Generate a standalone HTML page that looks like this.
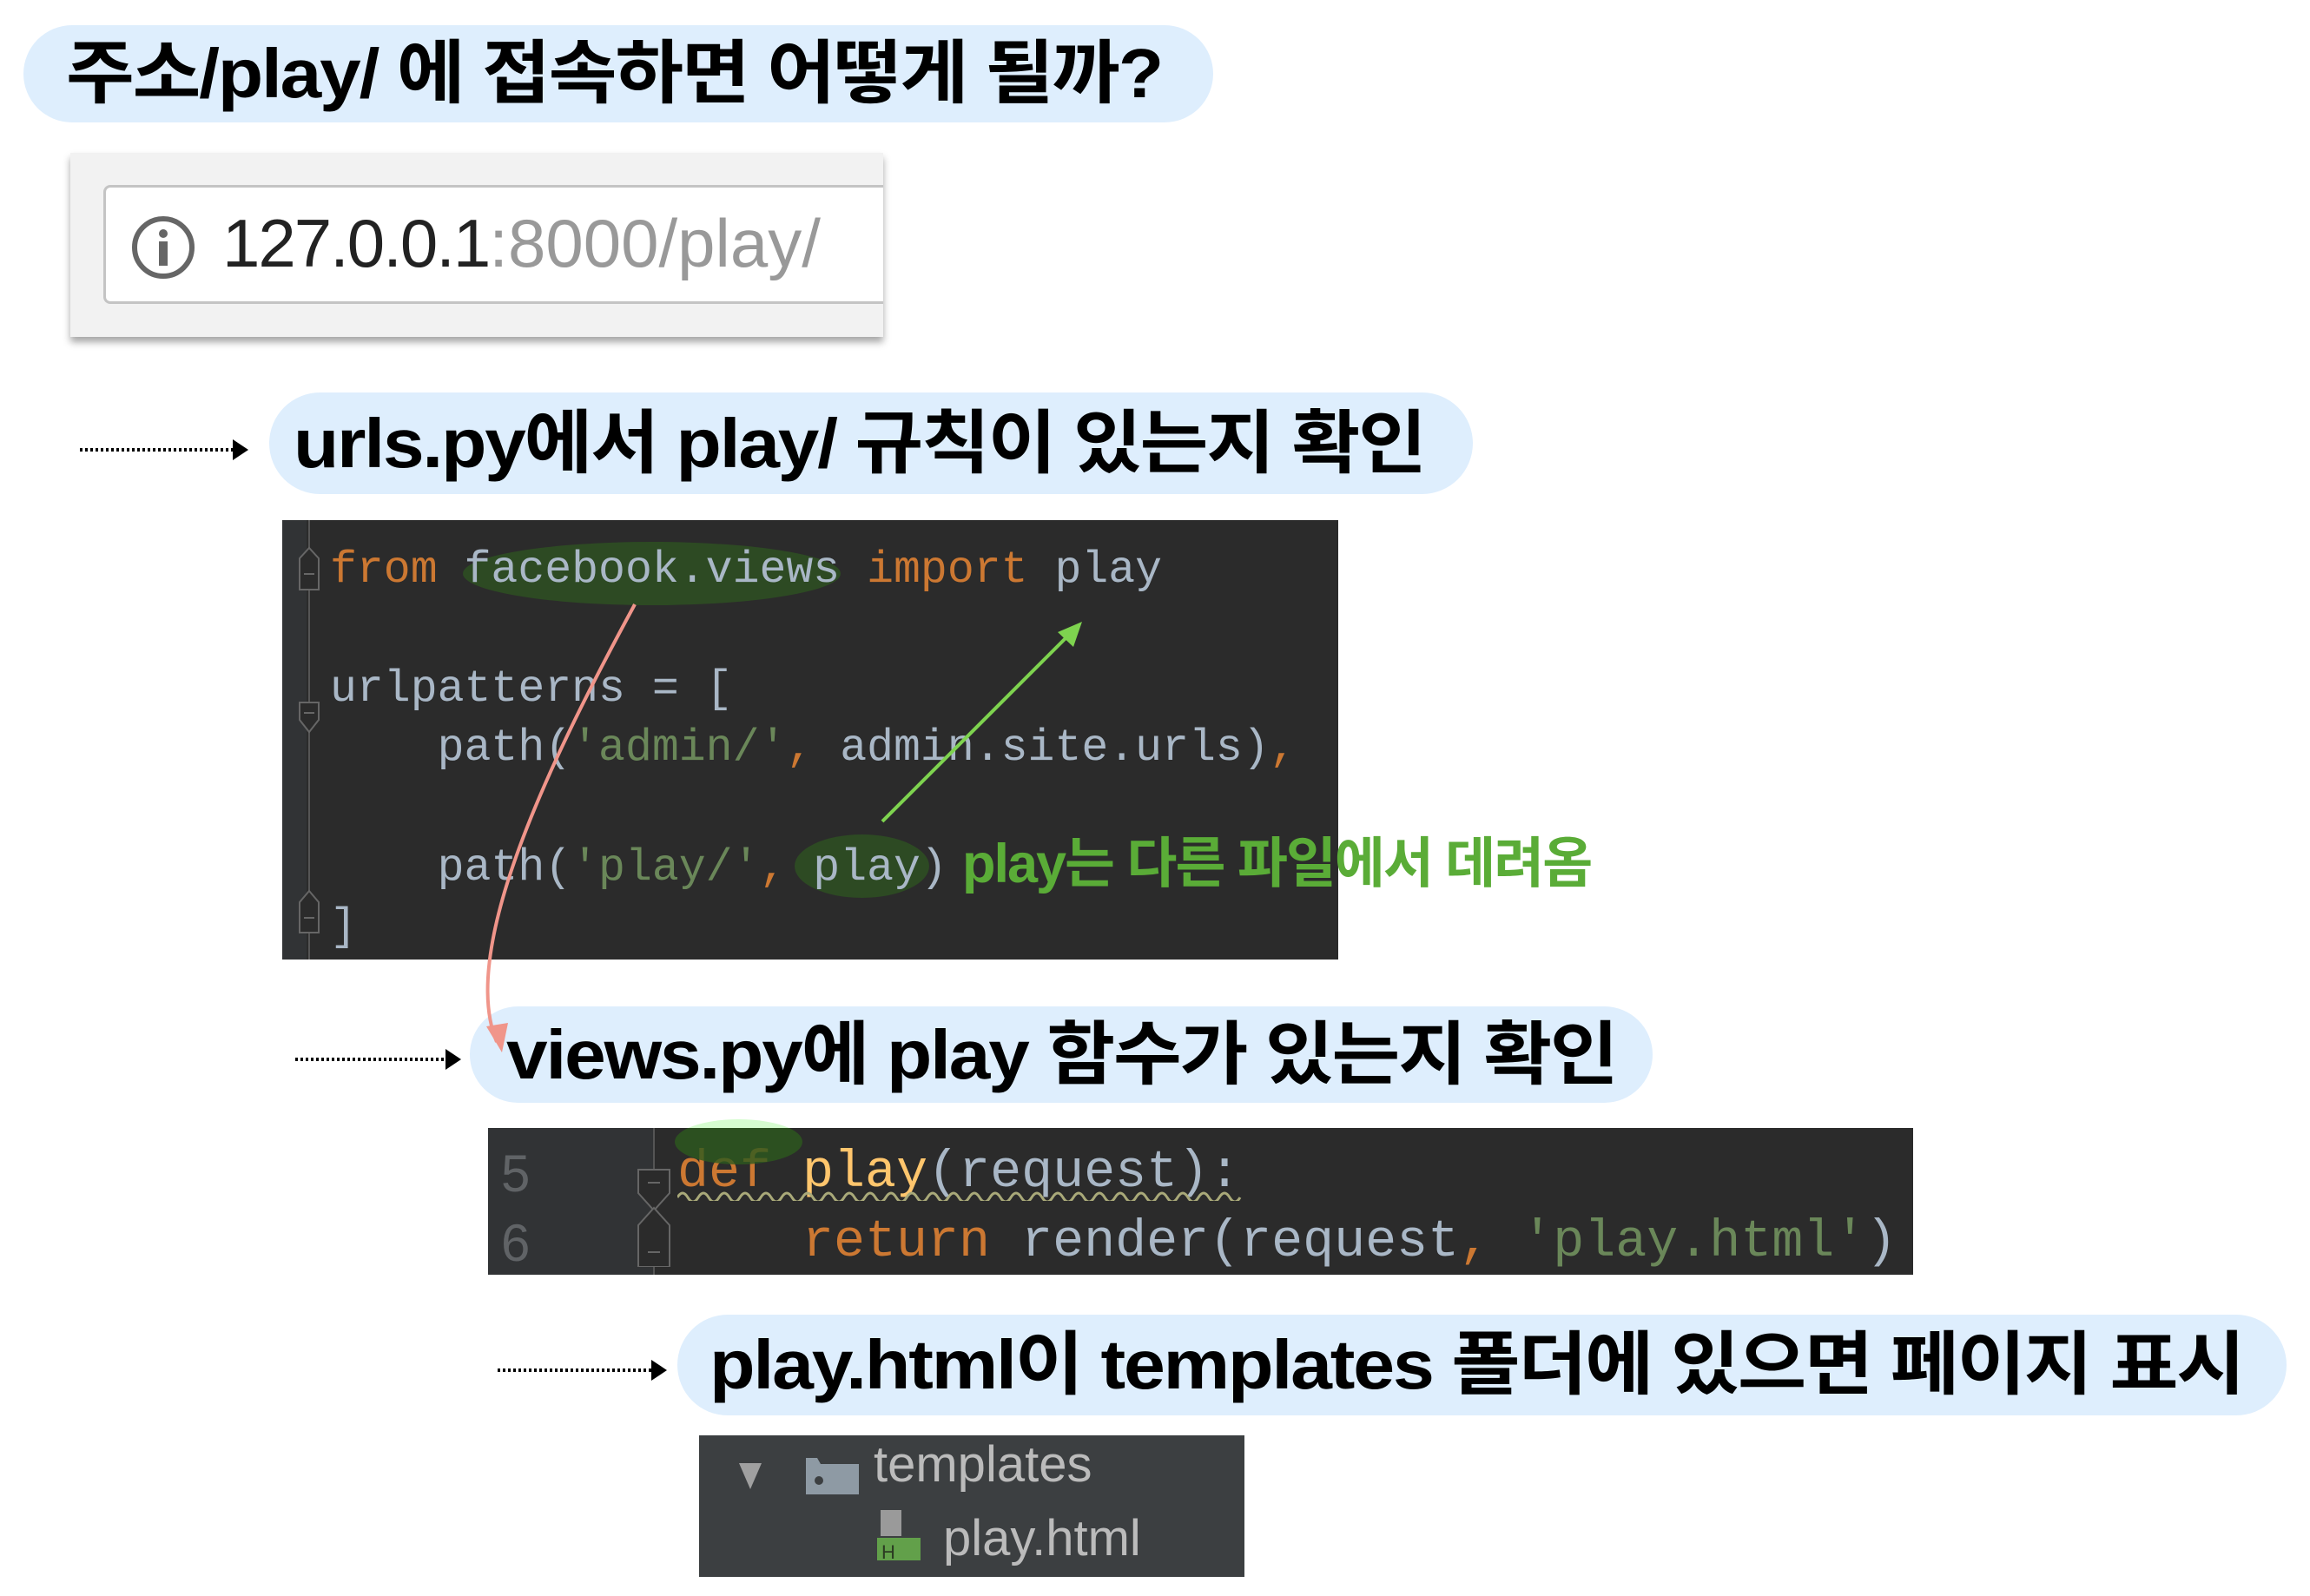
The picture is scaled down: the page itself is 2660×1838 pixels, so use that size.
<!DOCTYPE html>
<html><head><meta charset="utf-8"><style>
*{margin:0;padding:0;box-sizing:border-box}
body{width:2660px;height:1838px;background:#fff;position:relative;overflow:hidden;font-family:"Liberation Sans","Noto Sans CJK KR",sans-serif}
.abs{position:absolute}
.pill{position:absolute;background:#deeefd;border-radius:60px}
.pt{position:absolute;font-weight:bold;color:#000;white-space:nowrap;font-size:80px;line-height:1;transform-origin:0 0;letter-spacing:-2px}
.code{position:absolute;background:#2b2b2b;font-family:"Liberation Mono",monospace;white-space:pre;color:#a9b7c6}
.ln{position:absolute;white-space:pre;line-height:1}
.k{color:#cc7832}.s{color:#6a8759}
</style></head><body>

<div class="pill" style="left:27px;top:29px;width:1370px;height:112px"></div>
<div class="pt" style="left:76px;top:45px;transform:scaleX(1.07)">주소/play/ 에 접속하면 어떻게 될까?</div>

<div class="abs" style="left:81px;top:176px;width:936px;height:212px;background:#f2f2f2;box-shadow:0 6px 8px rgba(0,0,0,0.35)"></div>
<div class="abs" style="left:119px;top:213px;width:898px;height:137px;background:#fff;border:3px solid #c4c4c4;border-right:none;border-radius:8px 0 0 8px"></div>
<svg class="abs" style="left:148px;top:245px" width="80" height="80" viewBox="0 0 80 80"><circle cx="40" cy="40" r="33" fill="none" stroke="#666" stroke-width="6"/><circle cx="40" cy="24" r="5" fill="#666"/><rect x="35" y="33" width="10" height="28" fill="#666"/></svg>
<div class="abs" style="left:256px;top:241px;font-size:78px;line-height:1;white-space:nowrap;letter-spacing:-2px;color:#222">127.0.0.1<span style="color:#999;letter-spacing:0">:8000/play/</span></div>

<svg class="abs" style="left:0;top:0" width="2660" height="1838">
<g stroke="#000" stroke-width="4" stroke-dasharray="3 3"><line x1="92" y1="518" x2="270" y2="518"/><line x1="340" y1="1220" x2="515" y2="1220"/><line x1="573" y1="1578" x2="752" y2="1578"/></g>
<g fill="#000"><path d="M268 506 L286 518 L268 530Z"/><path d="M513 1208 L531 1220 L513 1232Z"/><path d="M750 1566 L768 1578 L750 1590Z"/></g>
</svg>

<div class="pill" style="left:310px;top:452px;width:1386px;height:117px"></div>
<div class="pt" style="left:338px;top:471px;transform:scaleX(1.07)">urls.py에서 play/ 규칙이 있는지 확인</div>

<div class="code" style="left:325px;top:599px;width:1216px;height:506px">
<div class="abs" style="left:0;top:0;width:28px;height:506px;background:#313335"></div>
<div class="abs" style="left:30px;top:0;width:2px;height:506px;background:#555"></div>
<svg class="abs" style="left:12px;top:30px" width="40" height="470"><g fill="#2b2b2b" stroke="#666" stroke-width="2"><path d="M8 30 L8 14 L19 2 L30 14 L30 50 L8 50Z"/><path d="M8 180 L30 180 L30 200 L19 214 L8 200Z"/><path d="M8 425 L8 410 L19 397 L30 410 L30 445 L8 445Z"/></g><g stroke="#666" stroke-width="2"><line x1="13" y1="32" x2="25" y2="32"/><line x1="13" y1="192" x2="25" y2="192"/><line x1="13" y1="428" x2="25" y2="428"/></g></svg>
<div class="abs" style="left:208px;top:25px;width:435px;height:73px;border-radius:50%;background:#2d4a23"></div>
<div class="abs" style="left:590px;top:362px;width:155px;height:73px;border-radius:50%;background:#2d4a23"></div>
<div class="ln" style="left:55px;top:33px;font-size:51.5px"><span class="k">from</span> facebook.views <span class="k">import</span> play</div>
<div class="ln" style="left:55px;top:170px;font-size:51.5px">urlpatterns = [</div>
<div class="ln" style="left:55px;top:238px;font-size:51.5px">    path(<span class="s">'admin/'</span><span class="k">,</span> admin.site.urls)<span class="k">,</span></div>
<div class="ln" style="left:55px;top:376px;font-size:51.5px">    path(<span class="s">'play/'</span><span class="k">,</span> play)</div>
<div class="ln" style="left:55px;top:444px;font-size:51.5px">]</div>
</div>
<div class="abs" style="left:1108px;top:964px;font-size:63px;font-weight:bold;color:#5aac37;white-space:nowrap;line-height:1;letter-spacing:-2px">play는 다른 파일에서 데려옴</div>

<div class="pill" style="left:541px;top:1159px;width:1362px;height:111px"></div>
<div class="pt" style="left:583px;top:1175px;transform:scaleX(1.07)">views.py에 play 함수가 있는지 확인</div>

<svg class="abs" style="left:0;top:0;z-index:5" width="2660" height="1838">
<path d="M731 696 C 620 900, 530 1100, 572 1200" fill="none" stroke="#f0958a" stroke-width="4"/>
<path d="M560 1182 L578 1212 L585 1178Z" fill="#f0958a"/>
<line x1="1016" y1="946" x2="1236" y2="726" stroke="#7ed34f" stroke-width="4"/>
<path d="M1246 716 L1236 745 L1218 728Z" fill="#7ed34f"/>
</svg>

<div class="code" style="left:562px;top:1299px;width:1641px;height:169px">
<div class="abs" style="left:0;top:0;width:191px;height:169px;background:#313335"></div>
<div class="abs" style="left:190px;top:0;width:2px;height:169px;background:#555"></div>
<svg class="abs" style="left:170px;top:40px" width="42" height="120"><g fill="#2b2b2b" stroke="#666" stroke-width="2"><path d="M3 8 L39 8 L39 35 L21 55 L3 35Z"/><path d="M3 95 L3 72 L21 52 L39 72 L39 120 L3 120Z"/></g><g stroke="#666" stroke-width="2"><line x1="14" y1="23" x2="28" y2="23"/><line x1="14" y1="103" x2="28" y2="103"/></g></svg>
<div class="ln" style="left:15px;top:23px;font-size:60px;color:#606366;font-family:'Liberation Sans',sans-serif">5</div>
<div class="ln" style="left:15px;top:103px;font-size:60px;color:#606366;font-family:'Liberation Sans',sans-serif">6</div>
<div class="ln" style="left:218px;top:22px;font-size:60px"><span class="k">def</span> <span style="color:#ffc66d">play</span>(request):</div>
<div class="ln" style="left:218px;top:102px;font-size:60px">    <span class="k">return</span> render(request<span class="k">,</span> <span class="s">'play.html'</span>)</div>
<svg class="abs" style="left:218px;top:70px" width="650" height="14"><path d="M0 10 q6 -10 12 0 t12 0 t12 0 t12 0 t12 0 t12 0 t12 0 t12 0 t12 0 t12 0 t12 0 t12 0 t12 0 t12 0 t12 0 t12 0 t12 0 t12 0 t12 0 t12 0 t12 0 t12 0 t12 0 t12 0 t12 0 t12 0 t12 0 t12 0 t12 0 t12 0 t12 0 t12 0 t12 0 t12 0 t12 0 t12 0 t12 0 t12 0 t12 0 t12 0 t12 0 t12 0 t12 0 t12 0 t12 0 t12 0 t12 0 t12 0 t12 0 t12 0 t12 0 t12 0 t12 0 t12 0" fill="none" stroke="#a9a979" stroke-width="3"/></svg>
</div>
<div class="abs" style="left:777px;top:1289px;width:147px;height:52px;border-radius:50%;background:#d6fcd0;clip-path:inset(0 0 42px 0)"></div>
<div class="abs" style="left:777px;top:1289px;width:147px;height:52px;border-radius:50%;background:rgba(45,90,30,0.8);clip-path:inset(10px 0 0 0)"></div>

<div class="pill" style="left:780px;top:1514px;width:1853px;height:116px"></div>
<div class="pt" style="left:817px;top:1532px;transform:scaleX(1.075)">play.html이 templates 폴더에 있으면 페이지 표시</div>

<div class="abs" style="left:805px;top:1653px;width:628px;height:163px;background:#3c3f41"></div>
<svg class="abs" style="left:805px;top:1653px" width="628" height="163">
<path d="M46 32 L72 32 L59 62Z" fill="#a0a0a0"/>
<path d="M123 26 L136 26 L140 33 L184 33 L184 68 L123 68Z" fill="#8e9aa4"/>
<circle cx="138" cy="52" r="5" fill="#3c3f41"/>
<rect x="209" y="86" width="24" height="30" fill="#9a9a9a"/>
<rect x="205" y="118" width="50" height="26" fill="#62a04a"/>
<text x="210" y="142" font-family="Liberation Sans" font-size="22" fill="#2b3a22">H</text>
</svg>
<div class="abs" style="left:1006px;top:1658px;font-size:58px;color:#bbb;line-height:1">templates</div>
<div class="abs" style="left:1086px;top:1743px;font-size:58px;color:#bbb;line-height:1">play.html</div>

</body></html>
